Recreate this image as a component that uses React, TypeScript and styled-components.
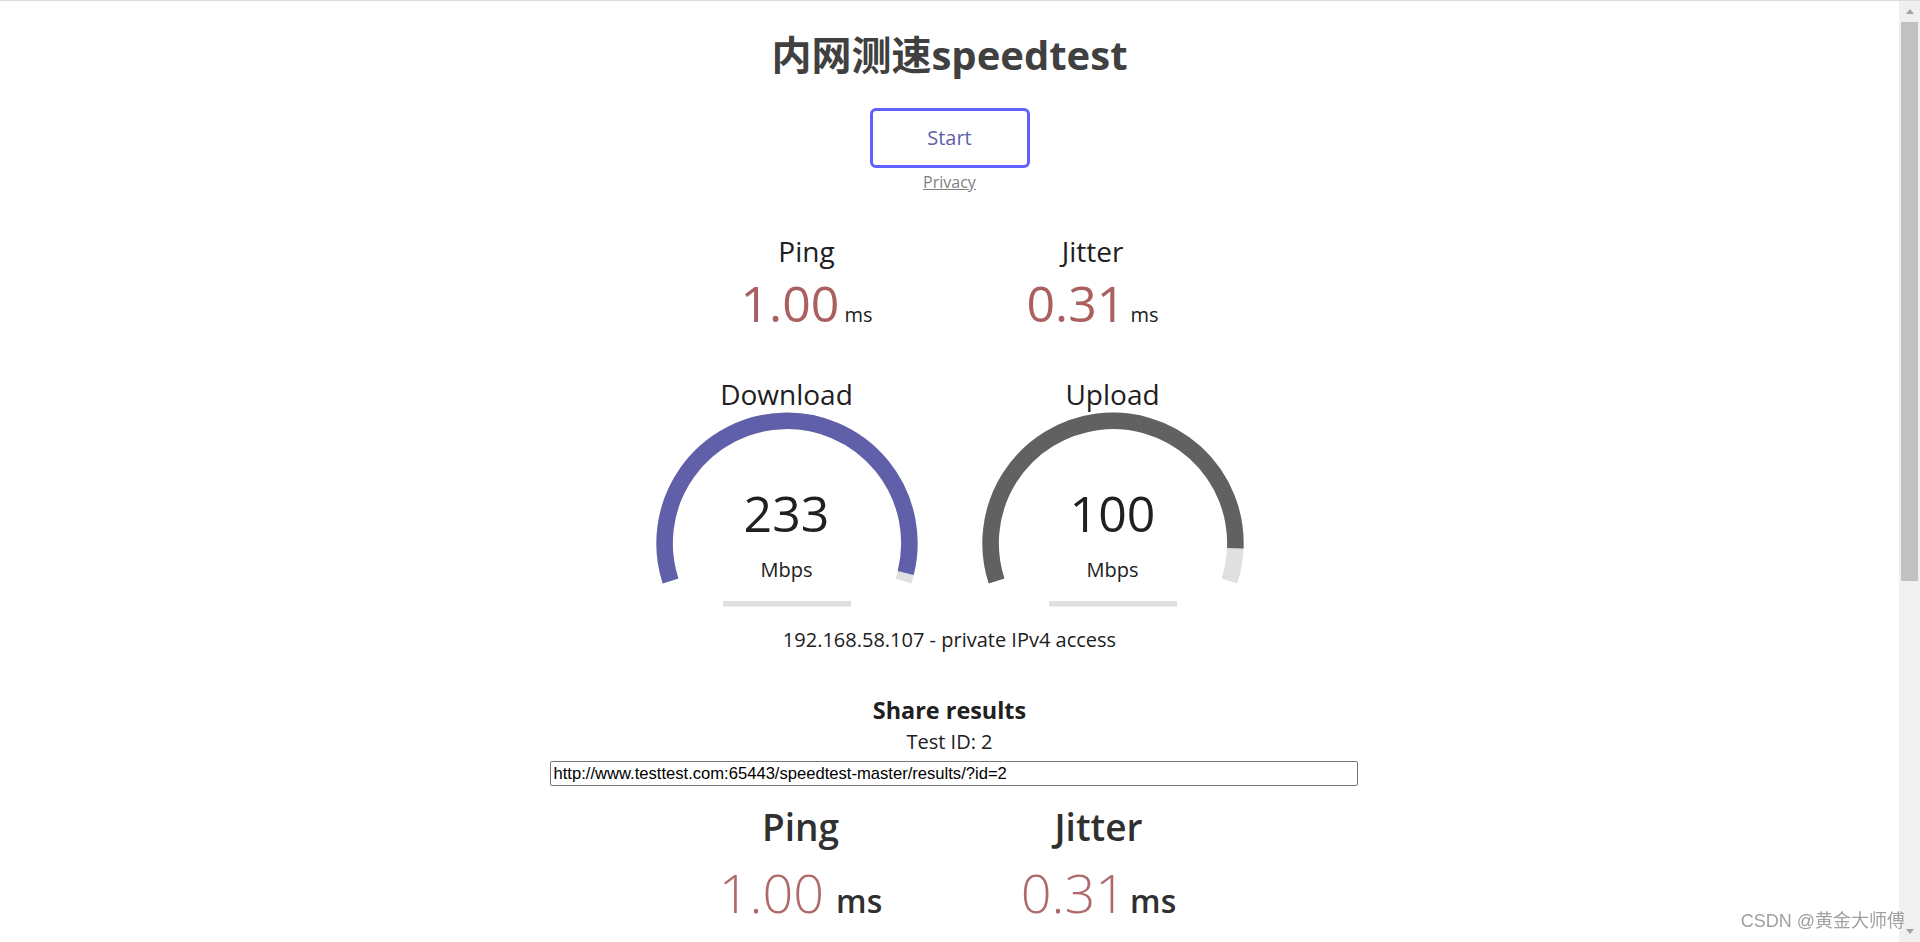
import React from "react";
import styled, { createGlobalStyle } from "styled-components";

const GlobalStyle = createGlobalStyle`
  html, body {
    margin: 0;
    padding: 0;
    background: #ffffff;
    color: #202020;
  }
  body {
    border-top: 1px solid #dcdcdc;
    text-align: center;
    font-family: "Open Sans", "Noto Sans CJK SC", sans-serif;
    font-size: 20px;
  }
`;

// gauge drawing, same numbers as the canvas meter (320x250 box)
const CX = 160;
const CY = 170.25;
const R = 122.4;
const LW = 16.5;

function arcPath(amount: number): string {
  const a0 = -Math.PI * 1.1;
  const a1 = a0 + amount * Math.PI * 1.2;
  const x0 = CX + R * Math.cos(a0);
  const y0 = CY + R * Math.sin(a0);
  const x1 = CX + R * Math.cos(a1);
  const y1 = CY + R * Math.sin(a1);
  const large = a1 - a0 > Math.PI ? 1 : 0;
  return `M ${x0.toFixed(2)} ${y0.toFixed(2)} A ${R} ${R} 0 ${large} 1 ${x1.toFixed(2)} ${y1.toFixed(2)}`;
}

const mbpsToAmount = (s: number) => 1 - 1 / Math.pow(1.3, Math.sqrt(s));

type GaugeProps = { name: string; value: number; color: string };

function Gauge({ name, value, color }: GaugeProps): JSX.Element {
  return (
    <GaugeArea>
      <GaugeSvg width="320" height="250" viewBox="0 0 320 250">
        <path d={arcPath(1)} fill="none" stroke="#E0E0E0" strokeWidth={LW} />
        <path d={arcPath(mbpsToAmount(value))} fill="none" stroke={color} strokeWidth={LW} />
        <rect x="96" y="228" width="128" height="5.5" fill="#E0E0E0" />
      </GaugeSvg>
      <GaugeName>{name}</GaugeName>
      <GaugeValue>{value}</GaugeValue>
      <GaugeUnit>Mbps</GaugeUnit>
    </GaugeArea>
  );
}

type SmallProps = { name: string; value: string };

function SmallMetric({ name, value }: SmallProps): JSX.Element {
  return (
    <SmallArea>
      <SmallName>{name}</SmallName>
      <SmallValueRow>
        <SmallValue>{value}</SmallValue>
        <SmallUnit>ms</SmallUnit>
      </SmallValueRow>
    </SmallArea>
  );
}

type ResultCellProps = {
  label: string;
  value: string;
  unit: string;
  color: string;
  gap?: number;
};

function ResultCell({ label, value, unit, color, gap = 12 }: ResultCellProps): JSX.Element {
  return (
    <ResultCellBox>
      <ResultLabel>{label}</ResultLabel>
      <ResultValueRow>
        <ResultValue $color={color}>{value}</ResultValue>
        <ResultUnit $gap={gap}>{unit}</ResultUnit>
      </ResultValueRow>
    </ResultCellBox>
  );
}

function ScrollBar(): JSX.Element {
  return (
    <ScrollColumn>
      <ScrollButton>
        <ArrowUp />
      </ScrollButton>
      <ScrollTrack>
        <ScrollThumb />
      </ScrollTrack>
      <ScrollButton>
        <ArrowDown />
      </ScrollButton>
    </ScrollColumn>
  );
}

export default function App(): JSX.Element {
  return (
    <Window>
      <GlobalStyle />
      <Page>
        <Title>内网测速speedtest</Title>
        <StartButton type="button">Start</StartButton>
        <PrivacyLine>
          <PrivacyLink href="#">Privacy</PrivacyLink>
        </PrivacyLine>

        <Test>
          <Group>
            <SmallMetric name="Ping" value="1.00" />
            <SmallMetric name="Jitter" value="0.31" />
          </Group>
          <Group>
            <Gauge name="Download" value={233} color="#6060AA" />
            <Gauge name="Upload" value={100} color="#616161" />
          </Group>

          <IpArea>192.168.58.107 - private IPv4 access</IpArea>

          <ShareArea>
            <ShareTitle>Share results</ShareTitle>
            <TestId>Test ID: 2</TestId>
            <ResultsUrl
              type="text"
              readOnly
              value="http://www.testtest.com:65443/speedtest-master/results/?id=2"
            />
            <ResultsImage>
              <ResultGrid>
                <ResultCell label="Ping" value="1.00" unit="ms" color="#AE6A6A" />
                <ResultCell label="Jitter" value="0.31" unit="ms" color="#AE6A6A" gap={4} />
                <ResultCell label="Download" value="233" unit="Mbps" color="#6A6AAE" />
                <ResultCell label="Upload" value="100" unit="Mbps" color="#666666" />
              </ResultGrid>
              <ResultFooter>
                <span>192.168.58.107 - private IPv4 access</span>
                <Brand>LibreSpeed</Brand>
              </ResultFooter>
            </ResultsImage>
          </ShareArea>
        </Test>
      </Page>
      <ScrollBar />

      <Watermark>CSDN @黄金大师傅</Watermark>
    </Window>
  );
}

const Window = styled.div`
  display: flex;
  align-items: flex-start;
`;

const Page = styled.main`
  flex: 1;
  min-width: 0;
`;

const ScrollColumn = styled.div`
  position: sticky;
  top: 0;
  flex-shrink: 0;
  width: 21px;
  height: calc(100vh - 1px);
  display: flex;
  flex-direction: column;
  background: #f0f0f0;
`;

const ScrollButton = styled.div`
  height: 21px;
  display: flex;
  align-items: center;
  justify-content: center;
`;

const ArrowUp = styled.span`
  width: 0;
  height: 0;
  border-left: 4.5px solid transparent;
  border-right: 4.5px solid transparent;
  border-bottom: 5px solid #a3a3a3;
`;

const ArrowDown = styled.span`
  width: 0;
  height: 0;
  border-left: 4.5px solid transparent;
  border-right: 4.5px solid transparent;
  border-top: 5px solid #a3a3a3;
`;

const ScrollTrack = styled.div`
  flex: 1;
  padding: 0 2px;
`;

const ScrollThumb = styled.div`
  height: 559px;
  background: #c1c1c1;
`;

const Title = styled.h1`
  margin: 27px 0 26px;
  font-size: 40px;
  line-height: 54px;
  font-weight: 700;
  color: #404040;
`;

const StartButton = styled.button`
  display: block;
  box-sizing: border-box;
  margin: 0 auto;
  padding: 0;
  width: 160px;
  height: 60px;
  border: 3px solid #6060ff;
  border-radius: 6px;
  background: transparent;
  color: #6060aa;
  font-family: inherit;
  font-size: 20px;
  line-height: 54px;
  cursor: pointer;
`;

const PrivacyLine = styled.div`
  margin-top: 3px;
  font-size: 16px;
  line-height: 22px;
`;

const PrivacyLink = styled.a`
  color: #808080;
  text-decoration: underline;
`;

const Test = styled.div`
  margin-top: 40px;
  margin-bottom: 240px;
`;

const Group = styled.div`
  display: flex;
  justify-content: center;
  gap: 6px;
`;

const SmallArea = styled.div`
  width: 280px;
  height: 140px;
`;

const SmallName = styled.div`
  font-size: 28px;
  line-height: 37px;
`;

const SmallValueRow = styled.div`
  display: flex;
  justify-content: center;
  align-items: baseline;
  height: 66px;
`;

const SmallValue = styled.span`
  font-size: 50px;
  line-height: 66px;
  color: #aa6060;
`;

const SmallUnit = styled.span`
  margin-left: 5px;
  font-size: 20px;
`;

const GaugeArea = styled.div`
  position: relative;
  width: 320px;
  height: 250px;
  display: flex;
  flex-direction: column;
`;

const GaugeSvg = styled.svg`
  position: absolute;
  top: 0;
  left: 0;
`;

const GaugeName = styled.div`
  position: relative;
  margin-top: 2px;
  font-size: 28px;
  line-height: 38px;
`;

const GaugeValue = styled.div`
  position: relative;
  margin-top: 66.5px;
  font-size: 50px;
  line-height: 66px;
`;

const GaugeUnit = styled.div`
  position: relative;
  margin-top: 11.5px;
  font-size: 20px;
  line-height: 26px;
`;

const IpArea = styled.div`
  margin-top: 3.5px;
  line-height: 26px;
`;

const ShareArea = styled.div`
  width: 800px;
  margin: 42px auto 0;
`;

const ShareTitle = styled.h3`
  margin: 0;
  font-size: 23.4px;
  line-height: 30px;
  font-weight: 700;
`;

const TestId = styled.p`
  margin: 4px 0 0;
  line-height: 26px;
`;

const ResultsUrl = styled.input`
  display: block;
  box-sizing: border-box;
  width: 808px;
  height: 25px;
  margin: 6.5px 0 0;
  padding: 1px 3px;
  border: 1px solid #767676;
  border-radius: 2px;
  background: #fff;
  color: #000;
  text-align: left;
  font-family: "Liberation Sans", Arial, sans-serif;
  font-size: 16.6px;
  outline: none;
`;

const ResultsImage = styled.div`
  margin-top: 4px;
  padding-top: 14px;
  height: 464px;
  box-sizing: border-box;
  display: flex;
  flex-direction: column;
  justify-content: space-between;
`;

const ResultGrid = styled.div`
  display: grid;
  grid-template-columns: 298px 298px;
  justify-content: center;
  row-gap: 40px;
`;

const ResultCellBox = styled.div`
  display: flex;
  flex-direction: column;
  align-items: center;
`;

const ResultLabel = styled.div`
  font-size: 37px;
  line-height: 46px;
  font-weight: 600;
  color: #303030;
`;

const ResultValueRow = styled.div`
  display: flex;
  align-items: baseline;
  margin-top: 6px;
`;

const ResultValue = styled.span<{ $color: string }>`
  font-size: 54px;
  line-height: 72px;
  font-weight: 300;
  color: ${(p) => p.$color};
`;

const ResultUnit = styled.span<{ $gap: number }>`
  margin-left: ${(p) => p.$gap}px;
  font-size: 32px;
  font-weight: 600;
  color: #303030;
`;

const ResultFooter = styled.div`
  display: flex;
  justify-content: space-between;
  padding: 0 20px 16px;
  font-size: 18px;
  color: #a0a0a0;
`;

const Brand = styled.span`
  font-weight: 600;
  color: #b0b0b0;
`;

const Watermark = styled.div`
  position: fixed;
  right: 15px;
  bottom: 10px;
  z-index: 2;
  font-family: "Liberation Sans", "Noto Sans CJK SC", sans-serif;
  font-size: 18px;
  line-height: 22px;
  color: #a0a0a0;
  text-shadow: 0 0 2px #ffffff;
`;
